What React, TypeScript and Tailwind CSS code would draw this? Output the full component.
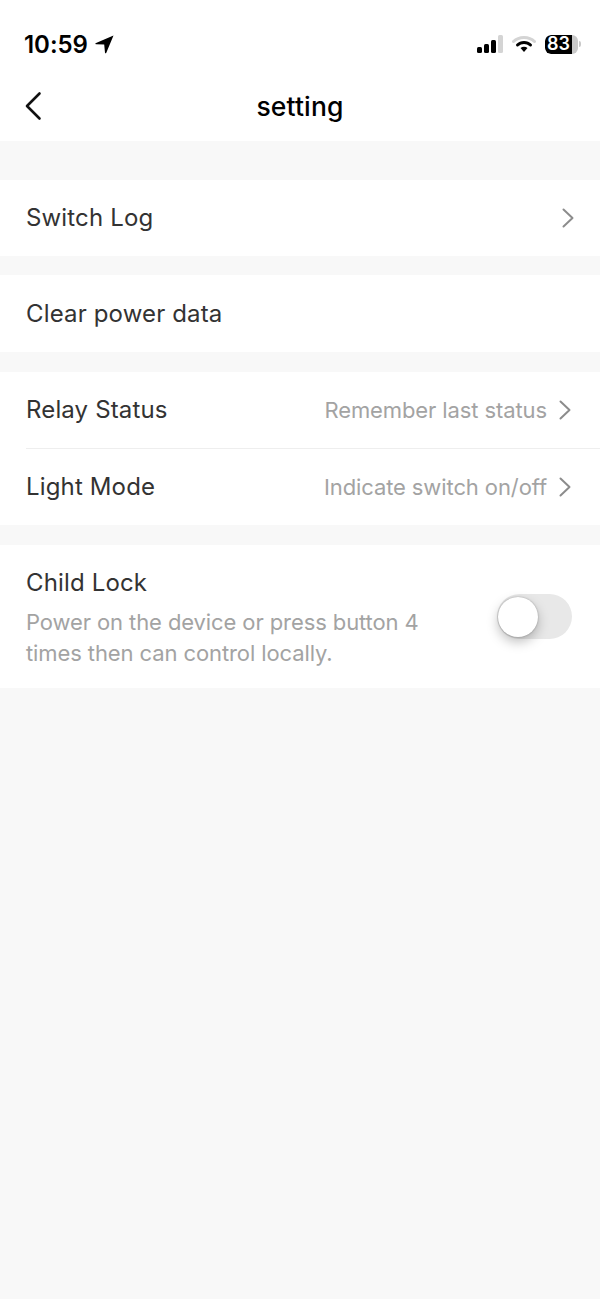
import React from "react";

const font = { fontFamily: "Inter, 'Liberation Sans', sans-serif" };

function Chevron() {
  return (
    <svg width="14" height="22" viewBox="0 0 14 22" fill="none" className="shrink-0">
      <path d="M2.5 2.5 L11.5 11 L2.5 19.5" stroke="#8c8c8c" strokeWidth="2" strokeLinecap="round" strokeLinejoin="round" />
    </svg>
  );
}

function Row({ label, value, chevron, h = "h-[76px]" }: { label: string; value?: string; chevron?: boolean; h?: string }) {
  return (
    <div className={`flex ${h} items-center justify-between pl-[26px] ${value ? "pr-[28px]" : "pr-[25px]"}`}>
      <span className="text-[24px] tracking-[0.15px] text-[#333333]">{label}</span>
      <div className="flex items-center gap-[11px]">
        {value && <span className="text-[22px] tracking-[-0.1px] text-[#a3a3a3]">{value}</span>}
        {chevron && <Chevron />}
      </div>
    </div>
  );
}

export default function App() {
  return (
    <div className="flex h-[1299px] w-[600px] flex-col bg-[#f8f8f8]" style={font}>
      <div className="h-[141px] bg-white">
        <div className="flex h-[76px] items-start justify-between pl-[24px] pr-[19px] pt-[30px]">
          <div className="flex h-[28px] items-center gap-[7px]">
            <span className="translate-y-px text-[24px] font-semibold leading-[28px] tracking-[-0.05px] text-black">10:59</span>
            <svg width="19" height="19" viewBox="0 0 19 19">
              <path d="M18.5 0.5 L0.5 8.2 Q0 9 1 9.2 L9.2 9.6 L10 17.8 Q10.5 18.8 11.2 18 Z" fill="#000" />
            </svg>
          </div>
          <div className="flex h-[28px] items-center gap-[9px]">
            <svg width="26" height="18" viewBox="0 0 26 18">
              <rect x="0" y="12" width="5" height="6" rx="1.5" fill="#000" />
              <rect x="7" y="9" width="5" height="9" rx="1.5" fill="#000" />
              <rect x="14" y="5" width="5" height="13" rx="1.5" fill="#000" />
              <rect x="21" y="0" width="5" height="18" rx="1.5" fill="#d4d4d4" />
            </svg>
            <svg width="24" height="18" viewBox="0 0 24 18" fill="none">
              <path d="M1.5 6.5 C7 1 17 1 22.5 6.5" stroke="#d4d4d4" strokeWidth="3" strokeLinecap="round" />
              <path d="M5.5 10 C9 6.5 15 6.5 18.5 10" stroke="#000" strokeWidth="3" strokeLinecap="round" />
              <path d="M8.5 13 L12 17 L15.5 13 C13.5 11.3 10.5 11.3 8.5 13 Z" fill="#000" />
            </svg>
            <div className="flex items-center">
              <div className="flex h-[19px] w-[33px] items-center overflow-hidden rounded-[6px] bg-[#c9c9c9]">
                <div className="flex h-full w-[27px] items-center justify-center rounded-l-[6px] bg-black text-[18px] font-semibold leading-none text-white">
                  83
                </div>
              </div>
              <div className="ml-[1px] h-[6px] w-[2px] rounded-r-[2px] bg-[#c9c9c9]" />
            </div>
          </div>
        </div>
        <div className="relative flex h-[60px] items-center justify-center">
          <svg width="18" height="30" viewBox="0 0 18 30" fill="none" className="absolute left-[24px] top-[15px]">
            <path d="M15.5 2.5 L3 15 L15.5 27.5" stroke="#111" strokeWidth="2.6" strokeLinecap="round" strokeLinejoin="round" />
          </svg>
          <span className="text-[26.5px] font-medium leading-[32px] tracking-[0.15px] text-black">setting</span>
        </div>
      </div>

      <div className="mt-[39px] bg-white">
        <Row label="Switch Log" chevron />
      </div>
      <div className="mt-[19px] bg-white">
        <Row label="Clear power data" h="h-[77px]" />
      </div>
      <div className="mt-[20px] bg-white">
        <Row label="Relay Status" value="Remember last status" chevron />
        <div className="ml-[26px] h-px bg-[#eeeeee]" />
        <Row label="Light Mode" value="Indicate switch on/off" chevron />
      </div>
      <div className="mt-[20px] flex h-[143px] items-center justify-between bg-white pl-[26px] pr-[28px]">
        <div className="w-[420px] pt-[2px]">
          <div className="text-[24px] leading-[32px] tracking-[0.15px] text-[#333333]">Child Lock</div>
          <div className="mt-[8px] text-[22px] leading-[31px] tracking-[-0.1px] text-[#a3a3a3]">
            Power on the device or press button 4 times then can control locally.
          </div>
        </div>
        <div className="flex h-[45px] w-[75px] items-center rounded-full bg-[#e8e8e8] pl-px">
          <div className="h-[40px] w-[40px] rounded-full bg-white shadow-[0_5px_12px_rgba(0,0,0,0.25),0_0_2px_rgba(0,0,0,0.3)]" />
        </div>
      </div>
    </div>
  );
}
